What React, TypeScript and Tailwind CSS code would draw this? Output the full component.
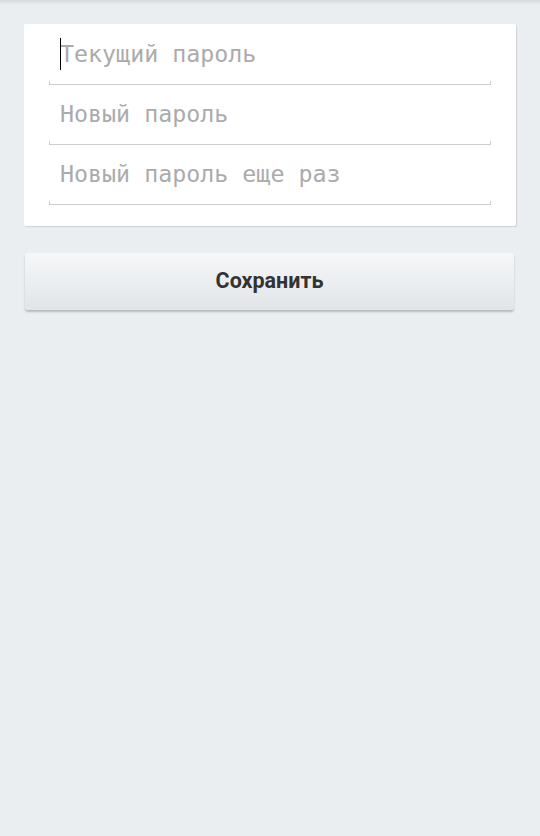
const FIELDS = ['Текущий пароль', 'Новый пароль', 'Новый пароль еще раз'];

function Field({ placeholder, focused }: { placeholder: string; focused?: boolean }) {
  return (
    <div className="h-[60px] flex flex-col justify-end">
      <div className="relative h-[40px]">
        <input
          type="password"
          placeholder={placeholder}
          className="w-full h-full pl-[11px] pb-[15px] bg-transparent outline-none caret-transparent text-[23.3px] text-[#444] placeholder:text-[#ababab] font-['DejaVu_Sans_Mono',monospace]"
        />
        {focused && <span className="absolute left-[11px] top-[-3px] w-px h-[32px] bg-black" />}
      </div>
      <div className="h-[4px] mb-[-1px] border-x border-b border-[#cdcdcd]" />
    </div>
  );
}

export default function App() {
  return (
    <div className="relative min-h-[836px] bg-[#ebeef1] px-[24px] pt-[24px] font-['Roboto',sans-serif]">
      <div className="absolute top-0 left-0 right-0 h-[5px] bg-gradient-to-b from-[#d9dcdf] to-transparent" />
      <div className="bg-white rounded-[2px] shadow-[1px_1px_1px_rgba(0,0,0,0.12)] pl-[25px] pr-[25px] pb-[22px]">
        {FIELDS.map((f, i) => (
          <Field key={f} placeholder={f} focused={i === 0} />
        ))}
      </div>
      <button className="mt-[27px] ml-px w-[489px] h-[57px] rounded-[3px] bg-gradient-to-b from-[#f5f7f9] to-[#e2e5e8] shadow-[0_2px_2px_rgba(0,0,0,0.22)] text-[21.5px] font-bold text-[#333]">
        Сохранить
      </button>
    </div>
  );
}
